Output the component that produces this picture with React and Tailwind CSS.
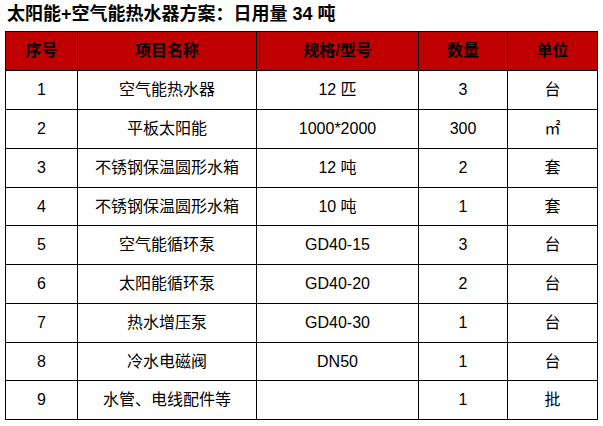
export default function App() {
  const rows = [
    ["1", "空气能热水器", "12 匹", "3", "台", 39],
    ["2", "平板太阳能", "1000*2000", "300", "㎡", 39],
    ["3", "不锈钢保温圆形水箱", "12 吨", "2", "套", 39],
    ["4", "不锈钢保温圆形水箱", "10 吨", "1", "套", 38],
    ["5", "空气能循环泵", "GD40-15", "3", "台", 39],
    ["6", "太阳能循环泵", "GD40-20", "2", "台", 39],
    ["7", "热水增压泵", "GD40-30", "1", "台", 39],
    ["8", "冷水电磁阀", "DN50", "1", "台", 38],
    ["9", "水管、电线配件等", "", "1", "批", 39],
  ];
  const font = { fontFamily: '"Liberation Sans", "Noto Sans CJK SC", sans-serif' };
  return (
    <div className="w-[603px] h-[426px] bg-white pl-[5px] text-black" style={font}>
      <div className="h-[31px] pt-[2px] pl-[2px] text-[18px] font-bold leading-[24px] whitespace-nowrap">
        太阳能+空气能热水器方案：日用量 34 吨
      </div>
      <div className="grid grid-cols-[72px_179px_162px_89px_90px] border-l border-t border-black w-[593px]">
        {["序号", "项目名称", "规格/型号", "数量", "单位"].map((h) => (
          <div
            key={h}
            className="h-[39px] bg-[#c00000] border-r border-b border-black flex items-center justify-center text-[16px] font-bold"
          >
            {h}
          </div>
        ))}
        {rows.map((r) =>
          r.slice(0, 5).map((c, i) => (
            <div
              key={r[0] + "-" + i}
              className="border-r border-b border-black flex items-center justify-center text-[16px] whitespace-nowrap"
              style={{ height: r[5] }}
            >
              {c}
            </div>
          ))
        )}
      </div>
    </div>
  );
}
